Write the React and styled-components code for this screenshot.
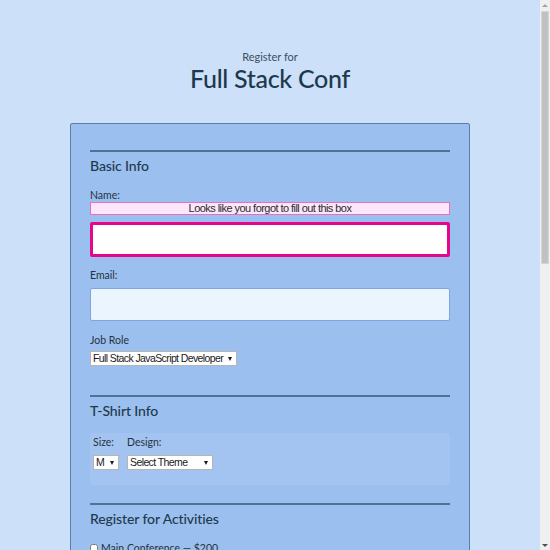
import React from "react";
import styled, { createGlobalStyle } from "styled-components";

const Global = createGlobalStyle`
  html { overflow: hidden; }
  body {
    margin: 0;
    background: #cce0fa;
    font-family: "Lato", "Open Sans", sans-serif;
    color: #1f3a4b;
  }
`;

const Shell = styled.div`
  display: flex;
  align-items: flex-start;
`;

const Page = styled.div`
  flex: 1;
  margin-right: 10px;
  padding: 50px 0 40px;
`;

const Scrollbar = styled.div`
  position: fixed;
  top: 0;
  right: 0;
  width: 10px;
  height: 550px;
  background: #f0f0f0;
  display: flex;
  flex-direction: column;
  align-items: center;
  z-index: 10;
`;

const Arrow = styled.div`
  width: 0;
  height: 0;
  margin: ${(p) => (p.$down ? "auto 0 3px" : "4px 0 0")};
  border-left: 3px solid transparent;
  border-right: 3px solid transparent;
  ${(p) =>
    p.$down
      ? "border-top: 3px solid #505050;"
      : "border-bottom: 3px solid #a3a3a3;"}
`;

const Thumb = styled.div`
  box-sizing: border-box;
  margin-top: 4px;
  width: 8px;
  height: 253px;
  background: #c1c1c1;
  border: 1px solid #d6d6d6;
`;

const Header = styled.header`
  text-align: center;
`;

const Sub = styled.p`
  margin: 0;
  font-size: 11px;
  line-height: 14px;
  color: #3d4f5c;
`;

const Title = styled.h1`
  margin: 0;
  font-size: 25px;
  letter-spacing: -0.3px;
  line-height: 28px;
  font-weight: 500;
  color: #1d3a4c;
`;

const Form = styled.form`
  box-sizing: border-box;
  width: 400px;
  margin: 31px auto 0;
  background: #9bbfee;
  border: 1px solid #5a7fa6;
  border-radius: 2px;
  padding: 26px 19px 30px;
`;

const Section = styled.fieldset`
  border: 0;
  margin: 0 0 ${(p) => p.$gap || 0}px;
  padding: 0;
  min-width: 0;
  border-top: 2px solid #4e7396;
`;

const Legend = styled.h2`
  margin: 5px 0 13px;
  font-size: 14px;
  letter-spacing: -0.1px;
  line-height: 18px;
  font-weight: 500;
  color: #1d3a4c;
`;

const Label = styled.label`
  display: block;
  font-size: 10.5px;
  line-height: 14px;
  color: #26333d;
  margin: ${(p) => p.$m || "0"};
`;

const ErrorMsg = styled.div`
  box-sizing: border-box;
  height: 13px;
  border: 1px solid #e472c4;
  background: #fbe7f9;
  text-align: center;
  font-family: "Liberation Sans", Arial, sans-serif;
  font-size: 11px;
  letter-spacing: -0.55px;
  line-height: 11px;
  color: #2c2c2c;
  margin-bottom: 7px;
`;

const TextInput = styled.input`
  display: block;
  box-sizing: border-box;
  width: 100%;
  height: ${(p) => (p.$error ? 35 : 33)}px;
  margin: 0 0 ${(p) => p.$mb || 0}px;
  border: ${(p) => (p.$error ? "3px solid #e5068b" : "1px solid #7ea4e2")};
  background: ${(p) => (p.$error ? "#ffffff" : "#eaf5fd")};
  border-radius: 2px;
  outline: none;
`;

const SelectWrap = styled.div`
  position: relative;
  width: ${(p) => p.$w}px;
  height: 15px;
  &::after {
    content: "";
    position: absolute;
    right: 5px;
    top: 6px;
    border-left: 2px solid transparent;
    border-right: 2px solid transparent;
    border-top: 4px solid #1a1a1a;
    pointer-events: none;
  }
`;

const Select = styled.select`
  display: block;
  box-sizing: border-box;
  height: 15px;
  width: 100%;
  padding: 0 4px 0 2px;
  border: 1px solid #b5b5b5;
  border-radius: 0;
  background: #fff;
  font-family: "Liberation Sans", Arial, sans-serif;
  font-size: 10.5px;
  letter-spacing: -0.6px;
  line-height: 13px;
  color: #1a1a1a;
  appearance: none;
  outline: none;
`;

const ShirtPanel = styled.div`
  display: flex;
  gap: 8px;
  background: #a3c4f1;
  border-radius: 3px;
  padding: 2px 3px 15px;
  margin: 1px 0 18px;
`;

const ShirtField = styled.div`
  display: flex;
  flex-direction: column;
  gap: 6px;
`;

const Check = styled.label`
  display: flex;
  align-items: center;
  gap: 3px;
  font-size: 10.5px;
  line-height: 14px;
  color: #26333d;
  margin-bottom: 8px;
`;

const Box = styled.input`
  width: 8px;
  height: 10px;
  margin: 0;
`;

const Button = styled.button`
  margin-top: 20px;
  font-size: 13px;
  padding: 8px 20px;
  border: 0;
  border-radius: 3px;
  background: #22627e;
  color: #fff;
`;

const activities = [
  "Main Conference — $200",
  "JavaScript Frameworks Workshop — Tuesday 9am-12pm, $100",
  "JavaScript Libraries Workshop — Tuesday 1pm-4pm, $100",
  "Express Workshop — Tuesday 9am-12pm, $100",
  "Node.js Workshop — Tuesday 1pm-4pm, $100",
  "Build tools Workshop — Wednesday 9am-12pm, $100",
  "npm Workshop — Wednesday 1pm-4pm, $100",
];

function Dropdown({ w, children }) {
  return (
    <SelectWrap $w={w}>
      <Select>{children}</Select>
    </SelectWrap>
  );
}

export default function App() {
  return (
    <>
      <Global />
      <Shell>
        <Page>
          <Header>
            <Sub>Register for</Sub>
            <Title>Full Stack Conf</Title>
          </Header>
          <Form>
            <Section $gap={29}>
              <Legend>Basic Info</Legend>
              <Label>Name:</Label>
              <ErrorMsg>Looks like you forgot to fill out this box</ErrorMsg>
              <TextInput $error $mb={11} />
              <Label $m="0 0 6px">Email:</Label>
              <TextInput $mb={12} />
              <Label $m="0 0 4px">Job Role</Label>
              <Dropdown w={147}>
                <option>Full Stack JavaScript Developer</option>
              </Dropdown>
            </Section>
            <Section>
              <Legend>T-Shirt Info</Legend>
              <ShirtPanel>
                <ShirtField>
                  <Label>Size:</Label>
                  <Dropdown w={26}>
                    <option>M</option>
                  </Dropdown>
                </ShirtField>
                <ShirtField>
                  <Label>Design:</Label>
                  <Dropdown w={86}>
                    <option>Select Theme</option>
                  </Dropdown>
                </ShirtField>
              </ShirtPanel>
            </Section>
            <Section>
              <Legend>Register for Activities</Legend>
              {activities.map((a) => (
                <Check key={a}>
                  <Box type="checkbox" />
                  {a}
                </Check>
              ))}
            </Section>
            <Section>
              <Legend>Payment Info</Legend>
              <Label $m="0 0 4px">I'm going to pay with:</Label>
              <Dropdown w={120}>
                <option>Credit Card</option>
              </Dropdown>
              <Label $m="12px 0 4px">Card Number:</Label>
              <TextInput $mb={10} />
              <Label $m="0 0 4px">Zip Code:</Label>
              <TextInput $mb={10} />
              <Label $m="0 0 4px">CVV:</Label>
              <TextInput $mb={10} />
            </Section>
            <Button type="button">Register</Button>
          </Form>
        </Page>
        <Scrollbar>
          <Arrow />
          <Thumb />
          <Arrow $down />
        </Scrollbar>
      </Shell>
    </>
  );
}
